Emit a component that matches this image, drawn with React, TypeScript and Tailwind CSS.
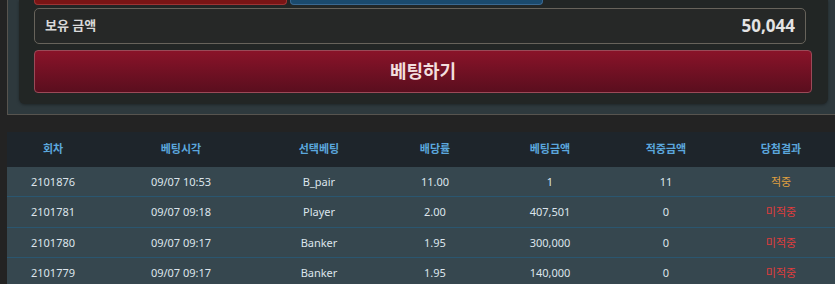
import React from "react";

const rows = [
  { id: "2101876", time: "09/07 10:53", pick: "B_pair", odds: "11.00", bet: "1", win: "11", result: "적중", hit: true },
  { id: "2101781", time: "09/07 09:18", pick: "Player", odds: "2.00", bet: "407,501", win: "0", result: "미적중", hit: false },
  { id: "2101780", time: "09/07 09:17", pick: "Banker", odds: "1.95", bet: "300,000", win: "0", result: "미적중", hit: false },
  { id: "2101779", time: "09/07 09:17", pick: "Banker", odds: "1.95", bet: "140,000", win: "0", result: "미적중", hit: false },
];

const headers = ["회차", "베팅시각", "선택베팅", "배당률", "베팅금액", "적중금액", "당첨결과"];

const grid = "grid grid-cols-[92px_164px_112px_120px_110px_122px_1fr]";

export default function App() {
  return (
    <div className="w-[835px] h-[284px] overflow-hidden bg-[#232323] font-['Noto_Sans','Noto_Sans_CJK_KR',sans-serif]">
      <div className="ml-[7px] border-l border-b border-[#57544f] bg-[#2e393d] pl-[11px] pr-[7px] pb-[10px]">
        <div className="bg-[#222625] rounded-b-[6px] pl-[15px] pr-[16px] pb-[11px] shadow-[0_1px_3px_rgba(0,0,0,0.35)]">
          <div className="flex gap-[3px] h-[5px]">
            <div className="w-[253px] h-full bg-[#7a1515] border-x border-b border-[#9c3434] rounded-b-[4px]" />
            <div className="w-[253px] h-full bg-[#1a4a6d] border-x border-b border-[#3a6890] rounded-b-[4px]" />
          </div>
          <div className="mt-[3px] mr-[6px] h-[36px] flex items-center justify-between pl-[10px] pr-[10px] border border-[#67635b] rounded-[5px] bg-[#262827]">
            <span className="text-[13px] font-bold text-[#d9d9d9]">보유 금액</span>
            <span className="text-[17px] font-bold text-[#e4e4e4]">50,044</span>
          </div>
          <button className="mt-[6px] w-full h-[43px] flex items-center justify-center rounded-[4px] border border-[#9a4a58] bg-gradient-to-b from-[#8a1329] to-[#5a0e1e] text-[18px] font-bold text-[#f2dede]">
            베팅하기
          </button>
        </div>
      </div>
      <div className="mt-[17px] ml-[7px]">
        <div className={`${grid} h-[35px] items-center bg-[#1e252b]`}>
          {headers.map((h) => (
            <div key={h} className="text-center text-[11px] font-bold text-[#5ba7dd]">
              {h}
            </div>
          ))}
        </div>
        {rows.map((r) => (
          <div key={r.id} className={`${grid} h-[30.4px] pt-[1px] items-center bg-[#36474f] border-b border-[#2a5670] text-[11px] text-[#dde5ec]`}>
            <div className="text-center">{r.id}</div>
            <div className="text-center">{r.time}</div>
            <div className="text-center">{r.pick}</div>
            <div className="text-center">{r.odds}</div>
            <div className="text-center">{r.bet}</div>
            <div className="text-center">{r.win}</div>
            <div className={`text-center ${r.hit ? "text-[#e0a040]" : "text-[#e03c3c]"}`}>{r.result}</div>
          </div>
        ))}
      </div>
    </div>
  );
}
